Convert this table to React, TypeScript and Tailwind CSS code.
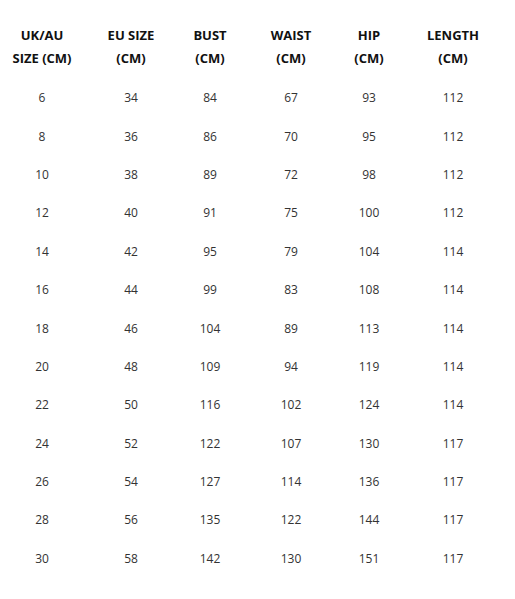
const headers = [
  ["UK/AU", "SIZE (CM)"],
  ["EU SIZE", "(CM)"],
  ["BUST", "(CM)"],
  ["WAIST", "(CM)"],
  ["HIP", "(CM)"],
  ["LENGTH", "(CM)"],
];

const rows = [
  [6, 34, 84, 67, 93, 112],
  [8, 36, 86, 70, 95, 112],
  [10, 38, 89, 72, 98, 112],
  [12, 40, 91, 75, 100, 112],
  [14, 42, 95, 79, 104, 114],
  [16, 44, 99, 83, 108, 114],
  [18, 46, 104, 89, 113, 114],
  [20, 48, 109, 94, 119, 114],
  [22, 50, 116, 102, 124, 114],
  [24, 52, 122, 107, 130, 117],
  [26, 54, 127, 114, 136, 117],
  [28, 56, 135, 122, 144, 117],
  [30, 58, 142, 130, 151, 117],
];

const cols = "grid grid-cols-[84px_94px_64px_98px_58px_110px]";

export default function App() {
  return (
    <div className="min-h-[599px] w-[515px] bg-white pt-[24px] font-['Open_Sans','Noto_Sans',sans-serif]">
      <div className={cols}>
        {headers.map((h, i) => (
          <div key={i} className="text-center text-[13px] font-bold leading-[23px] text-[#111]">
            <div>{h[0]}</div>
            <div>{h[1]}</div>
          </div>
        ))}
      </div>
      <div className="mt-[9px]">
        {rows.map((r, i) => (
          <div key={i} className={`${cols} h-[38.4px] items-center`}>
            {r.map((v, j) => (
              <div key={j} className="text-center text-[12px] text-[#333]">
                {v}
              </div>
            ))}
          </div>
        ))}
      </div>
    </div>
  );
}
